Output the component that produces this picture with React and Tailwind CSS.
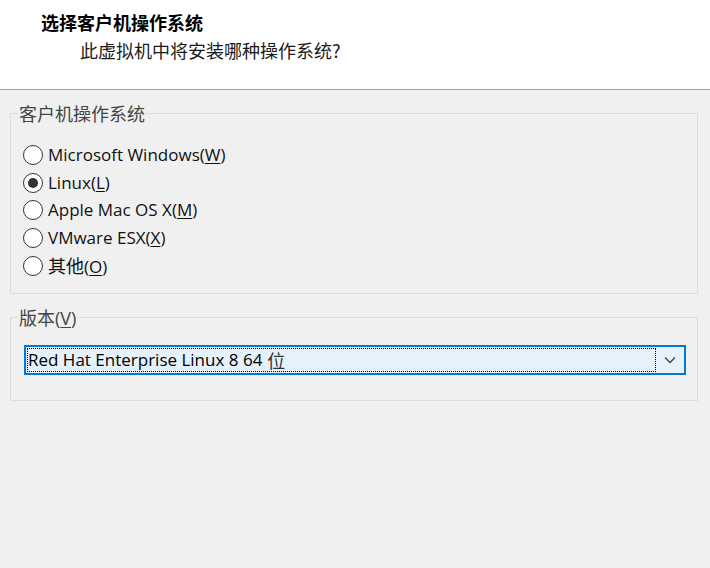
import { useState } from "react";

const osList = [
  { label: "Microsoft Windows", key: "W" },
  { label: "Linux", key: "L" },
  { label: "Apple Mac OS X", key: "M" },
  { label: "VMware ESX", key: "X" },
  { label: "其他", key: "O", cjk: true },
];

function Radio({ checked }) {
  return (
    <span className="flex h-[20px] w-[20px] shrink-0 items-center justify-center rounded-full border border-[#333333] bg-white">
      {checked && <span className="h-[10px] w-[10px] rounded-full bg-[#333333]" />}
    </span>
  );
}

const cjk = { fontFamily: '"Noto Sans CJK SC", sans-serif' };

export default function App() {
  const [os, setOs] = useState("L");

  return (
    <div
      className="flex h-[568px] w-[710px] flex-col bg-[#f0f0f0] text-[17px] text-black"
      style={{ fontFamily: '"Open Sans", "Noto Sans CJK SC", sans-serif' }}
    >
      {/* header */}
      <div className="h-[90px] shrink-0 border-b border-[#a0a0a0] bg-white pl-[41px] pt-[9px]" style={cjk}>
        <div className="text-[18px] font-bold leading-[26px]">选择客户机操作系统</div>
        <div className="mt-[2px] pl-[39px] text-[18px] leading-[26px] text-[#1a1a1a]">
          此虚拟机中将安装哪种操作系统?
        </div>
      </div>

      <div className="flex flex-col px-[10px] pr-[12px] pt-[12px]">
        <fieldset className="h-[192px] border border-[#dcdcdc] px-[12px] pt-[17px]">
          <legend className="ml-[-5px] px-px text-[18px] leading-[22px] text-[#444444]" style={cjk}>
            客户机操作系统
          </legend>
          <div className="flex flex-col">
            {osList.map((o) => (
              <label key={o.key} className="flex h-[27.75px] cursor-default items-center gap-[5px]" onClick={() => setOs(o.key)}>
                <Radio checked={os === o.key} />
                <span className="leading-[22px] text-[#111111]">
                  <span className={o.cjk ? "text-[18px]" : ""} style={o.cjk ? cjk : undefined}>{o.label}</span>(<span className="underline underline-offset-2">{o.key}</span>)
                </span>
              </label>
            ))}
          </div>
        </fieldset>

        <fieldset className="mt-[12px] h-[95px] border border-[#dcdcdc] pl-[13px] pr-[11px] pt-[16px]">
          <legend className="ml-[-6px] px-px text-[18px] leading-[22px] text-[#444444]">
            <span style={cjk}>版本</span>(<span className="underline underline-offset-2">V</span>)
          </legend>
          <div className="flex h-[30px] items-center border-2 border-[#0078d7] bg-[#e5f1fb] pl-px">
            <div className="flex h-[24px] flex-1 items-center border border-dotted border-black pl-0 leading-[22px]">
              Red Hat Enterprise Linux 8 64 <span className="ml-[5px] text-[18px] text-[#333]" style={cjk}>位</span>
            </div>
            <div className="flex w-[28px] items-center justify-center">
              <svg width="12" height="8" viewBox="0 0 12 8" fill="none" stroke="#444" strokeWidth="1.3">
                <path d="M1 1.5 L6 6.5 L11 1.5" />
              </svg>
            </div>
          </div>
        </fieldset>
      </div>
    </div>
  );
}
